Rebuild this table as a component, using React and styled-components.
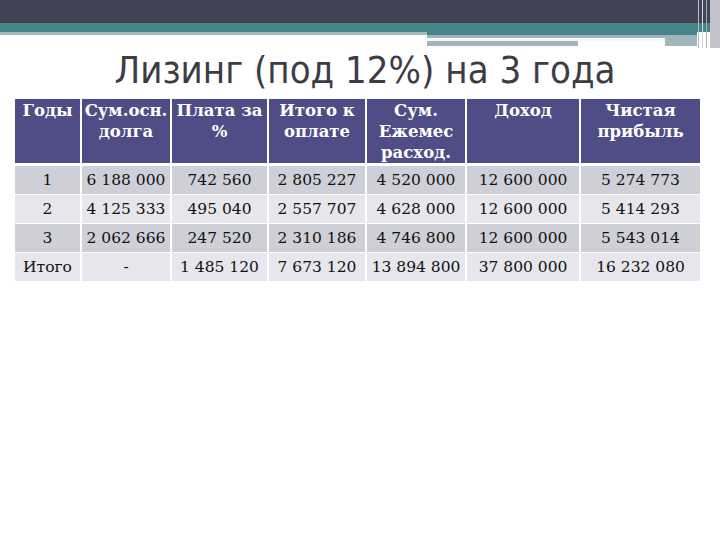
import React from "react";
import styled, { createGlobalStyle } from "styled-components";

const GlobalStyle = createGlobalStyle`
  html, body {
    margin: 0;
    padding: 0;
    background: #ffffff;
  }
`;

const Slide = styled.div`
  position: relative;
  width: 720px;
  height: 540px;
  background: #ffffff;
  overflow: hidden;
  display: flex;
  flex-direction: column;
`;

const DarkBar = styled.div`
  height: 23px;
  background: linear-gradient(#404453 0, #404453 19px, #463f55 23px);
`;

const TealBand = styled.div`
  height: 9px;
  background: #44858b;
`;

const StripeRow = styled.div`
  display: flex;
  height: 16px;
`;

const LeftStripe = styled.div`
  width: 427px;
  height: 3px;
  background: #a6b9bc;
`;

const RightDeco = styled.div`
  flex: 1;
  display: flex;
  flex-direction: column;
`;

const DecoLine = styled.div`
  height: ${(p) => p.h}px;
  width: ${(p) => p.w}px;
  background: ${(p) => p.bg};
  display: flex;
`;

const Piece = styled.div`
  width: ${(p) => p.w}px;
  height: 100%;
  background: ${(p) => p.bg};
`;

const EdgeLines = styled.div`
  position: absolute;
  top: 0;
  right: 0;
  width: 22px;
  height: 48px;
  display: flex;
  gap: 3px;
  background: linear-gradient(90deg, transparent 0, transparent 12px, #c4c3cc 12px);
`;

const EdgeLine = styled.div`
  width: 1px;
  height: 100%;
  background: ${(p) => p.c};
`;

const Title = styled.h1`
  margin: 0;
  padding: 0 0 0 10px;
  height: 51px;
  line-height: 44px;
  text-align: center;
  font-family: "DejaVu Sans Condensed", "Liberation Sans", sans-serif;
  font-weight: normal;
  font-size: 38px;
  color: #3c3c47;
`;

const Table = styled.table`
  margin-left: 15px;
  width: 685px;
  border-collapse: separate;
  border-spacing: 0;
  table-layout: fixed;
  font-family: "DejaVu Serif", "Liberation Serif", serif;
`;

const HeadCell = styled.th`
  background: #4e4d86;
  color: #ffffff;
  font-weight: bold;
  font-size: 16.5px;
  line-height: 21px;
  height: 64px;
  padding: 1px 0 0;
  vertical-align: top;
  text-align: center;
  border-right: 2px solid #ffffff;
  border-bottom: 3px solid #ffffff;
  box-sizing: border-box;
  &:last-child {
    border-right: none;
  }
`;

const Cell = styled.td`
  background: ${(p) => (p.odd ? "#cfcfd8" : "#e6e6ec")};
  color: #111111;
  font-size: 15.5px;
  height: 29px;
  padding: 0 1px;
  text-align: center;
  vertical-align: middle;
  white-space: nowrap;
  border-right: 2px solid #ffffff;
  border-bottom: 1px solid #ffffff;
  box-sizing: border-box;
  &:last-child {
    border-right: none;
  }
`;

const widths = [67, 90, 97, 98, 100, 114, 119];

const headers = [
  "Годы",
  "Сум.осн. долга",
  "Плата за %",
  "Итого к оплате",
  "Сум. Ежемес расход.",
  "Доход",
  "Чистая прибыль",
];

const rows = [
  ["1", "6 188 000", "742 560", "2 805 227", "4 520 000", "12 600 000", "5 274 773"],
  ["2", "4 125 333", "495 040", "2 557 707", "4 628 000", "12 600 000", "5 414 293"],
  ["3", "2 062 666", "247 520", "2 310 186", "4 746 800", "12 600 000", "5 543 014"],
  ["Итого", "-", "1 485 120", "7 673 120", "13 894 800", "37 800 000", "16 232 080"],
];

export default function App() {
  return (
    <>
      <GlobalStyle />
      <Slide>
        <DarkBar />
        <TealBand />
        <StripeRow>
          <LeftStripe />
          <RightDeco>
            <DecoLine h={3} w={270} bg="#44858b" />
            <DecoLine h={3} w={270} bg="#a2b6b9" />
            <DecoLine h={3} w={270} bg="#a2b6b9">
              <Piece w={238} bg="#f4f8f8" />
            </DecoLine>
            <DecoLine h={5} w={270} bg="#a2b6b9">
              <Piece w={151} bg="#a2b6b9" />
              <Piece w={87} bg="#ffffff" />
            </DecoLine>
          </RightDeco>
        </StripeRow>
        <EdgeLines>
          <EdgeLine c="#b8bcc4" />
          <EdgeLine c="#d6d9de" />
          <EdgeLine c="#a9adb6" />
        </EdgeLines>
        <Title>Лизинг (под 12%) на 3 года</Title>
        <Table>
          <colgroup>
            {widths.map((w, i) => (
              <col key={i} style={{ width: w }} />
            ))}
          </colgroup>
          <thead>
            <tr>
              {headers.map((h) => (
                <HeadCell key={h}>{h}</HeadCell>
              ))}
            </tr>
          </thead>
          <tbody>
            {rows.map((r, ri) => (
              <tr key={ri}>
                {r.map((v, ci) => (
                  <Cell key={ci} odd={ri % 2 === 0}>
                    {v}
                  </Cell>
                ))}
              </tr>
            ))}
          </tbody>
        </Table>
      </Slide>
    </>
  );
}
